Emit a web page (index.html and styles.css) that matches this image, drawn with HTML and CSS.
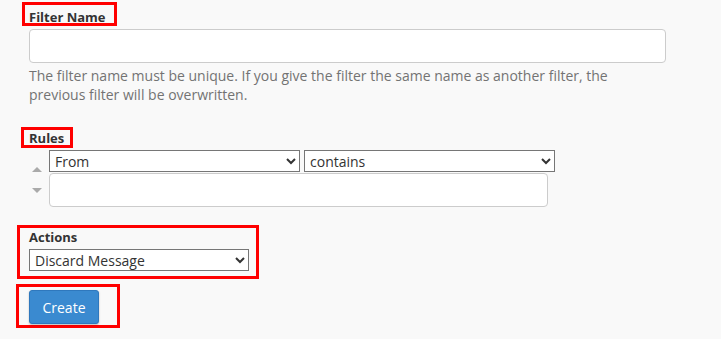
FILE: index.html
```html
<!DOCTYPE html>
<html lang="en">
<head>
    <meta charset="UTF-8">
    <title>Create a New Filter</title>
    <link rel="stylesheet" href="styles.css">
</head>
<body>
<form class="filter-form" id="filterForm">
    <div class="field">
        <span class="mark mark-name"><label for="filterName" class="field-label">Filter Name</label></span>
        <input type="text" id="filterName" class="text-input name-input">
        <p class="help-text">The filter name must be unique. If you give the filter the same name as another filter, the previous filter will be overwritten.</p>
    </div>

    <div class="field">
        <span class="mark mark-rules"><span class="field-label">Rules</span></span>
        <div class="rule">
            <div class="rule-sort">
                <span class="sort-up"></span>
                <span class="sort-down"></span>
            </div>
            <div class="rule-body">
                <div class="rule-selects">
                    <select class="select-box rule-part">
                        <option>From</option>
                        <option>Subject</option>
                        <option>To</option>
                        <option>Reply Address</option>
                        <option>Body</option>
                        <option>Any Header</option>
                    </select>
                    <select class="select-box rule-match">
                        <option>contains</option>
                        <option>matches regex</option>
                        <option>does not contain</option>
                        <option>equals</option>
                        <option>begins with</option>
                        <option>ends with</option>
                    </select>
                </div>
                <input type="text" class="text-input rule-value">
            </div>
        </div>
    </div>

    <div class="mark mark-actions">
        <label class="field-label" for="filterAction">Actions</label>
        <select id="filterAction" class="select-box action-select">
            <option>Discard Message</option>
            <option>Redirect to Email</option>
            <option>Fail With Message</option>
            <option>Stop Processing Rules</option>
            <option>Deliver to Folder</option>
            <option>Pipe to a Program</option>
        </select>
    </div>

    <div class="mark mark-create">
        <button type="submit" class="create-btn">Create</button>
    </div>
</form>
</body>
</html>
```

FILE: styles.css
```css
body {
    margin: 0;
    background: #f9f9f9;
    font-family: "Open Sans", Arial, sans-serif;
    color: #333;
}
.filter-form {
    padding: 2px 0 0 29px;
}
.field-label {
    font-weight: bold;
    font-size: 13px;
    line-height: 18px;
    color: #333;
}
.mark {
    display: block;
    box-sizing: border-box;
    border: 3px solid #f00;
}
.mark-name {
    width: 95px;
    height: 24px;
    margin-left: -7px;
    padding: 0 0 0 4px;
}
.mark-rules {
    width: 52px;
    height: 21px;
    margin: 23px 0 0 -8px;
    padding: 0 0 0 5px;
    line-height: 15px;
}
.mark-rules .field-label {
    line-height: 15px;
}
.text-input {
    display: block;
    box-sizing: border-box;
    height: 34px;
    background: #fff;
    border: 1px solid #ccc;
    border-radius: 4px;
    padding: 6px 12px;
    font-family: inherit;
    font-size: 14px;
}
.name-input {
    width: 637px;
    margin-top: 3px;
}
.help-text {
    margin: 3px 0 0;
    width: 620px;
    font-size: 14px;
    line-height: 19px;
    color: #737373;
}
.rule {
    display: flex;
    margin-top: 2px;
}
.rule-sort {
    width: 20px;
    display: flex;
    flex-direction: column;
    align-items: center;
    padding-top: 17px;
    gap: 16px;
    margin-left: -2px;
    margin-right: 2px;
}
.sort-up, .sort-down {
    width: 0;
    height: 0;
    border-left: 5px solid transparent;
    border-right: 5px solid transparent;
}
.sort-up {
    border-bottom: 5px solid #aaa;
}
.sort-down {
    border-top: 5px solid #aaa;
}
.rule-selects {
    display: flex;
    gap: 4px;
}
.select-box {
    box-sizing: border-box;
    height: 22px;
    font-family: inherit;
    font-size: 14px;
    color: #333;
    background: #fff;
    border: 1px solid #767676;
    border-radius: 0;
    padding: 0 1px;
}
.rule-part, .rule-match {
    width: 251px;
}
.rule-value {
    width: 499px;
    margin-top: 1px;
}
.mark-actions {
    width: 242px;
    height: 54px;
    margin: 18px 0 0 -12px;
    padding: 0 0 0 9px;
}
.mark-actions .field-label {
    display: block;
    margin-bottom: 3px;
}
.action-select {
    width: 220px;
}
.mark-create {
    width: 104px;
    height: 44px;
    margin: 5px 0 0 -13px;
    padding: 3px 0 0 10px;
}
.create-btn {
    box-sizing: border-box;
    width: 70px;
    height: 34px;
    background: #3a8ad0;
    border: 1px solid #2f78bd;
    border-radius: 3px;
    box-shadow: 0 1px 2px rgba(0, 0, 0, 0.25);
    color: #fff;
    font-family: inherit;
    font-size: 14px;
    cursor: pointer;
}
```
